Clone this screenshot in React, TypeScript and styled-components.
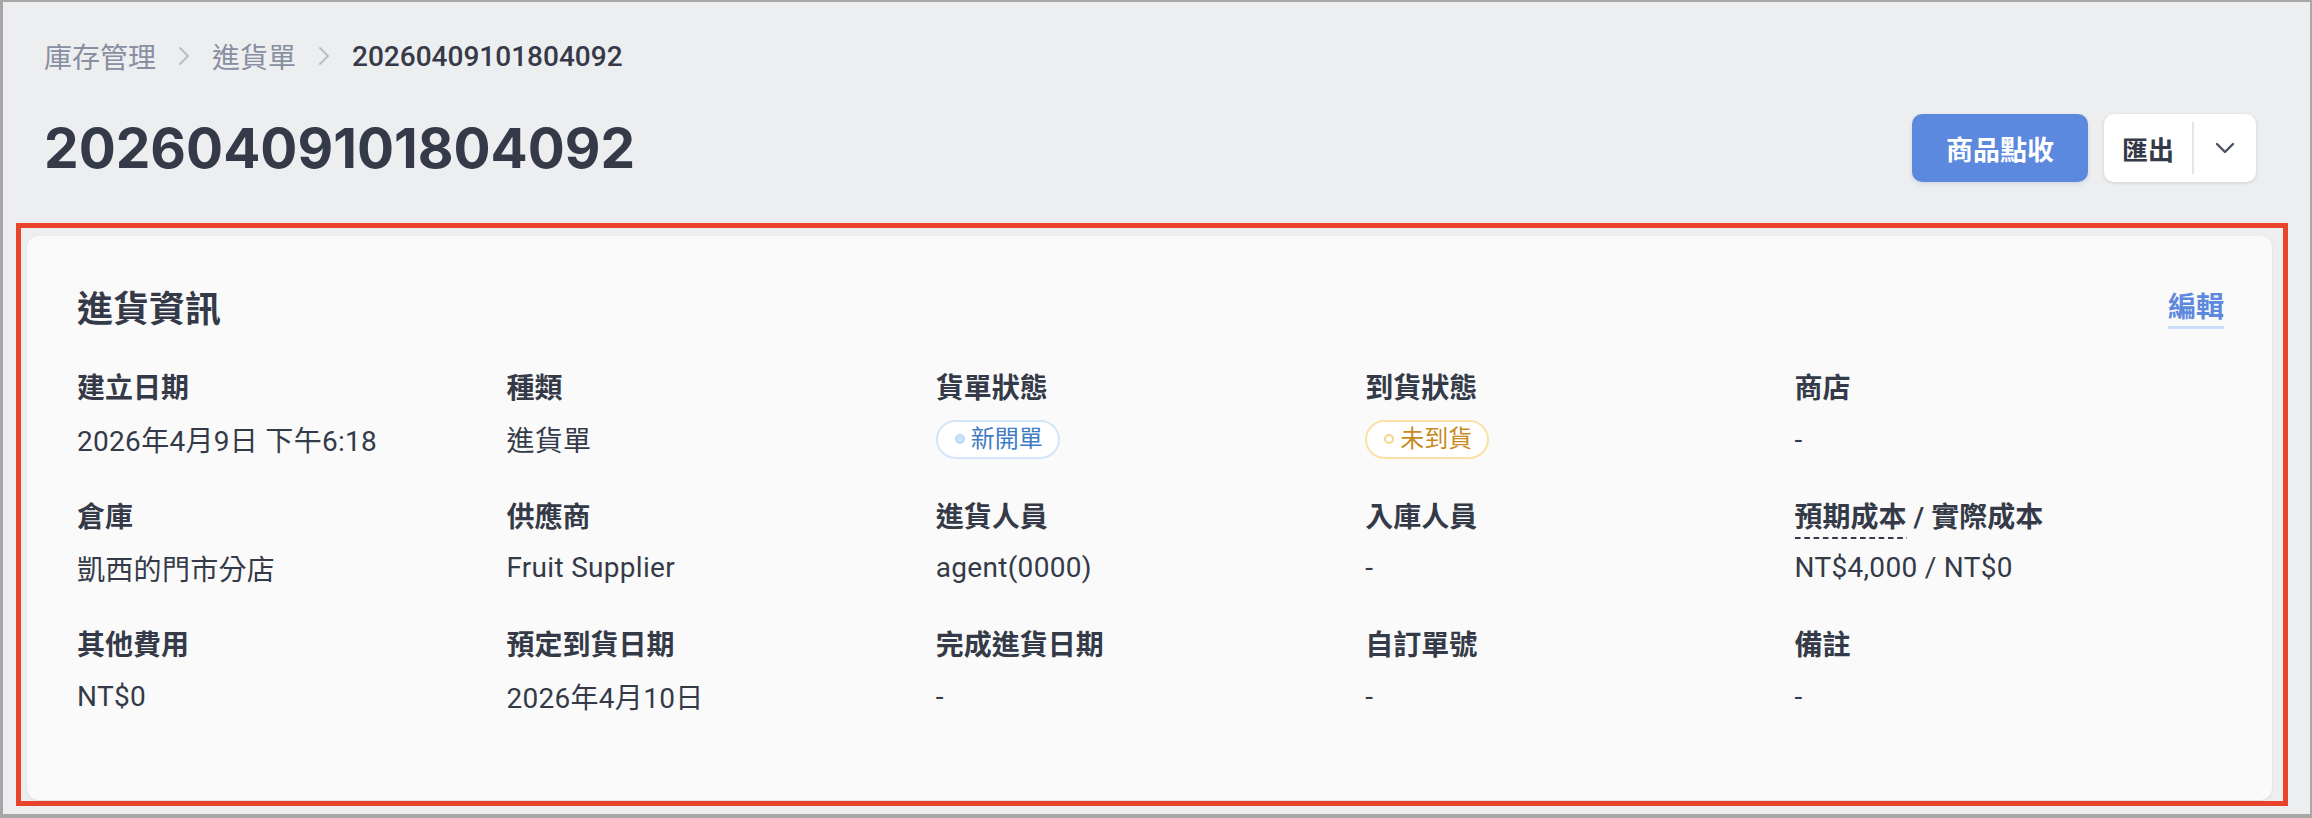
import React from "react";
import styled, { createGlobalStyle, css } from "styled-components";

const GlobalStyle = createGlobalStyle`
  html, body {
    margin: 0;
    padding: 0;
  }
  body {
    font-family: Roboto, "Noto Sans CJK TC", sans-serif;
    color: #353a48;
  }
`;

const Frame = styled.div`
  width: 2312px;
  height: 818px;
  box-sizing: border-box;
  border-style: solid;
  border-color: #a7a7a7;
  border-width: 2px 2px 4px 3px;
  background: #edeef0;
  display: flex;
  flex-direction: column;
  overflow: hidden;
`;

const Header = styled.header`
  padding: 34px 54px 0 41px;
`;

const Breadcrumb = styled.nav`
  display: flex;
  align-items: center;
  height: 40px;
  font-size: 28px;
`;

const Crumb = styled.span<{ current?: boolean }>`
  color: #878fa1;
  ${(props) =>
    props.current &&
    css`
      color: #353a48;
      font-weight: 500;
    `}
`;

const CrumbSep = styled.svg`
  width: 12px;
  height: 20px;
  margin: 0 22px 0 22px;
  color: #b9bfca;
`;

const TitleRow = styled.div`
  display: flex;
  align-items: center;
  justify-content: space-between;
  height: 70px;
  margin-top: 37px;
`;

const PageTitle = styled.h1`
  margin: 0;
  font-family: Inter, "Noto Sans CJK TC", sans-serif;
  font-size: 55px;
  font-weight: 700;
  line-height: 70px;
  color: #353a48;
`;

const Actions = styled.div`
  display: flex;
  align-items: center;
  gap: 16px;
`;

const PrimaryButton = styled.button`
  height: 68px;
  padding: 0 34px;
  border: none;
  border-radius: 10px;
  background: #5c88de;
  color: #fff;
  font-family: inherit;
  font-size: 27px;
  font-weight: 700;
  box-shadow: 0 2px 4px rgba(40, 60, 110, 0.12);
`;

const SplitButton = styled.div`
  height: 68px;
  display: flex;
  align-items: center;
  background: #fff;
  border-radius: 10px;
  box-shadow: 0 1px 4px rgba(0, 0, 0, 0.12);
`;

const SplitLabel = styled.span`
  padding: 0 18px;
  font-size: 26px;
  font-weight: 700;
  color: #353a48;
`;

const SplitDivider = styled.span`
  width: 2px;
  height: 52px;
  background: #e3e5ea;
`;

const SplitToggle = styled.span`
  width: 62px;
  display: flex;
  justify-content: center;
  color: #4b5163;

  svg {
    width: 20px;
    height: 12px;
  }
`;

const Highlight = styled.section`
  margin: 40px 22px 0 13px;
  border: 5px solid #e8442b;
  padding: 8px 11px 1px 6px;
`;

const Card = styled.div`
  background: #fafafa;
  border-radius: 12px;
  box-shadow: 0 1px 3px rgba(0, 0, 0, 0.08);
  padding: 48px 48px 83px 50px;
`;

const CardHeader = styled.div`
  display: flex;
  align-items: center;
  justify-content: space-between;
  height: 52px;
`;

const CardTitle = styled.h2`
  margin: 0;
  font-size: 36px;
  font-weight: 700;
  line-height: 52px;
  color: #353a48;
`;

const EditLink = styled.a`
  color: #5c88de;
  font-size: 28px;
  font-weight: 700;
  line-height: 32px;
  padding-bottom: 2px;
  text-decoration: none;
  border-bottom: 3px solid #cbdcf8;
`;

const FieldGrid = styled.div`
  display: grid;
  grid-template-columns: repeat(5, 1fr);
  row-gap: 36.5px;
  margin-top: 32px;
`;

const Field = styled.div`
  display: flex;
  flex-direction: column;
  align-items: flex-start;
  gap: 8px;
`;

const FieldLabel = styled.div`
  font-size: 28px;
  line-height: 42px;
  font-weight: 600;
  color: #353a48;
`;

const DashedTerm = styled.span`
  display: inline-block;
  height: 42px;
  background-image: linear-gradient(to right, #353a48 65%, transparent 0);
  background-size: 9.3px 2px;
  background-repeat: repeat-x;
  background-position: 0 100%;
`;

const FieldValue = styled.div`
  height: 42px;
  display: flex;
  align-items: center;
  font-size: 28px;
  letter-spacing: 0.3px;
  color: #353a48;
`;

type Tone = "info" | "warning";

const tones = {
  info: { border: "#d3e6fb", text: "#3f7cc4", dot: "#cfe3f9", dotBorder: "#bcd8f6" },
  warning: { border: "#fbe1a6", text: "#c98a22", dot: "#fff", dotBorder: "#f6d68a" },
};

const Badge = styled.span<{ tone: Tone }>`
  display: inline-flex;
  align-items: center;
  gap: 6px;
  height: 39px;
  box-sizing: border-box;
  padding: 0 15px 0 17px;
  border: 2px solid ${(props) => tones[props.tone].border};
  border-radius: 999px;
  background: #fff;
  color: ${(props) => tones[props.tone].text};
  font-size: 24px;
  letter-spacing: 0;
  line-height: 1;
`;

const Dot = styled.span<{ tone: Tone }>`
  width: 10px;
  height: 10px;
  box-sizing: border-box;
  border-radius: 50%;
  background: ${(props) => tones[props.tone].dot};
  border: 2px solid ${(props) => tones[props.tone].dotBorder};
`;

const ChevronRight = () => (
  <CrumbSep viewBox="0 0 12 20" fill="none">
    <path d="M2 2l8 8-8 8" stroke="currentColor" strokeWidth="2" strokeLinecap="round" strokeLinejoin="round" />
  </CrumbSep>
);

const ChevronDown = () => (
  <svg viewBox="0 0 20 12" fill="none">
    <path d="M2 2l8 8 8-8" stroke="currentColor" strokeWidth="2.4" strokeLinecap="round" strokeLinejoin="round" />
  </svg>
);

type FieldData = {
  label: React.ReactNode;
  value: React.ReactNode;
};

const fields: FieldData[] = [
  { label: "建立日期", value: "2026年4月9日 下午6:18" },
  { label: "種類", value: "進貨單" },
  {
    label: "貨單狀態",
    value: (
      <Badge tone="info">
        <Dot tone="info" />
        新開單
      </Badge>
    ),
  },
  {
    label: "到貨狀態",
    value: (
      <Badge tone="warning">
        <Dot tone="warning" />
        未到貨
      </Badge>
    ),
  },
  { label: "商店", value: "-" },
  { label: "倉庫", value: "凱西的門市分店" },
  { label: "供應商", value: "Fruit Supplier" },
  { label: "進貨人員", value: "agent(0000)" },
  { label: "入庫人員", value: "-" },
  {
    label: (
      <>
        <DashedTerm>預期成本</DashedTerm> / 實際成本
      </>
    ),
    value: "NT$4,000 / NT$0",
  },
  { label: "其他費用", value: "NT$0" },
  { label: "預定到貨日期", value: "2026年4月10日" },
  { label: "完成進貨日期", value: "-" },
  { label: "自訂單號", value: "-" },
  { label: "備註", value: "-" },
];

export default function App() {
  return (
    <>
      <GlobalStyle />
      <Frame>
        <Header>
          <Breadcrumb>
            <Crumb>庫存管理</Crumb>
            <ChevronRight />
            <Crumb>進貨單</Crumb>
            <ChevronRight />
            <Crumb current>20260409101804092</Crumb>
          </Breadcrumb>
          <TitleRow>
            <PageTitle>20260409101804092</PageTitle>
            <Actions>
              <PrimaryButton>商品點收</PrimaryButton>
              <SplitButton>
                <SplitLabel>匯出</SplitLabel>
                <SplitDivider />
                <SplitToggle>
                  <ChevronDown />
                </SplitToggle>
              </SplitButton>
            </Actions>
          </TitleRow>
        </Header>
        <Highlight>
          <Card>
            <CardHeader>
              <CardTitle>進貨資訊</CardTitle>
              <EditLink>編輯</EditLink>
            </CardHeader>
            <FieldGrid>
              {fields.map((field, i) => (
                <Field key={i}>
                  <FieldLabel>{field.label}</FieldLabel>
                  <FieldValue>{field.value}</FieldValue>
                </Field>
              ))}
            </FieldGrid>
          </Card>
        </Highlight>
      </Frame>
    </>
  );
}
